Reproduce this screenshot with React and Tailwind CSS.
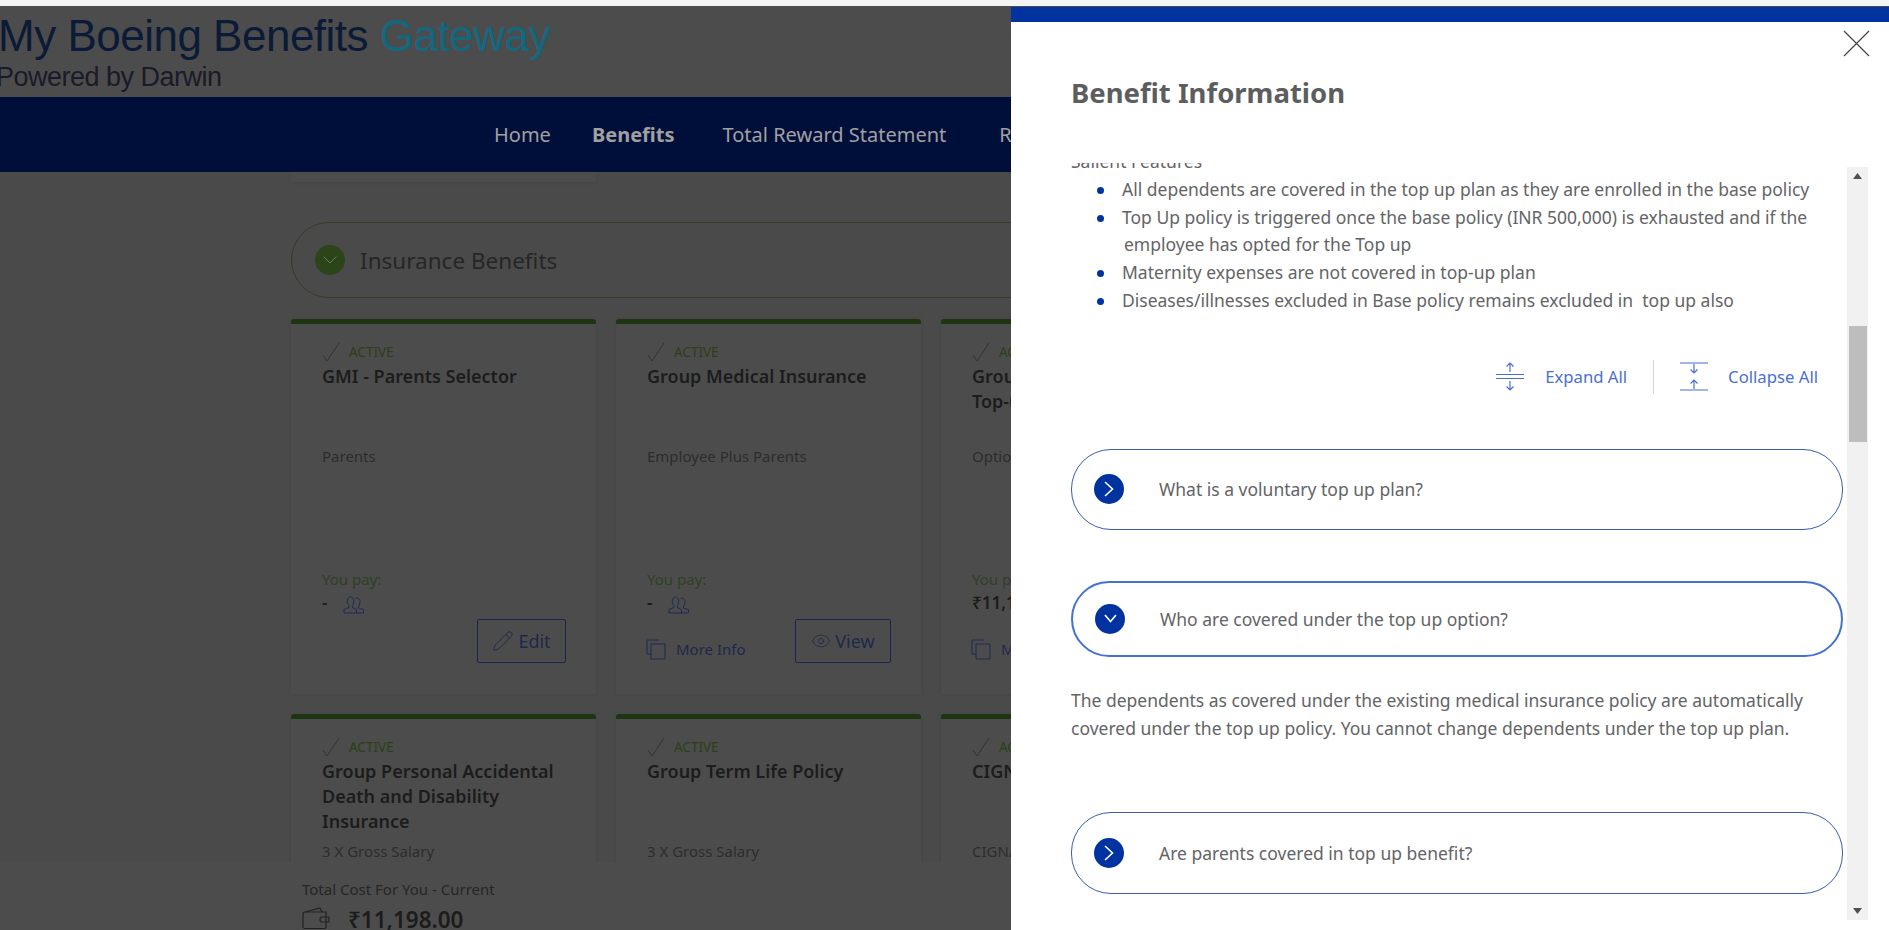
import React from 'react';
import { ChevronDown, Eye, Pencil } from 'lucide-react';

const cards = [
  { title: 'GMI - Parents Selector', sub: 'Parents', amount: '-', people: true, edit: true },
  { title: 'Group Medical Insurance', sub: 'Employee Plus Parents', amount: '-', people: true, more: true },
  { title: 'Group Medical Insurance Top-up', sub: 'Optional', amount: '₹11,198.00', more: true },
  { title: 'Group Personal Accidental Death and Disability Insurance', sub: '3 X Gross Salary', amount: '-' },
  { title: 'Group Term Life Policy', sub: '3 X Gross Salary', amount: '-' },
  { title: 'CIGNA', sub: 'CIGNA', amount: '-' },
];

const features = [
  'All dependents are covered in the top up plan as they are enrolled in the base policy',
  <>Top Up policy is triggered once the base policy (INR 500,000) is exhausted and if the<br /><span className="ml-[2px]">employee has opted for the Top up</span></>,
  'Maternity expenses are not covered in top-up plan',
  'Diseases/illnesses excluded in Base policy remains excluded in  top up also',
];

function CheckMark() {
  return (
    <svg width="18" height="20" viewBox="0 0 18 20" fill="none" stroke="#333333" strokeWidth="1">
      <path d="M1 13 L5 19 L17 1" />
    </svg>
  );
}

function People() {
  return (
    <svg className="mt-[5px]" width="22" height="18" viewBox="0 0 22 18" fill="none" stroke="#1d2b55" strokeWidth="1">
      <path d="M1 17 V13.5 L6 11.5 V9.5 C4.5 8 4 6 4.5 4 C5 1.5 6.5 1 7.5 1 C9 1 10.5 2 10.8 4 C11 6 10.5 8 9.5 9.5 V11.5 L13.5 13.5 V17 Z" />
      <path d="M12.5 2.5 C15 1.5 17 3 17 5.5 C17 7.5 16.5 9 15.5 10 V12 L20.5 13.5 V17 H13.5" />
    </svg>
  );
}

function CopyIcon() {
  return (
    <svg width="20" height="21" viewBox="0 0 20 21" fill="none" stroke="#1d2b55" strokeWidth="1">
      <path d="M13 1 H1 V15 H5" />
      <path d="M5 5 H19 V20 H5 Z" />
    </svg>
  );
}

function Wallet() {
  return (
    <svg className="-mt-[4px]" width="28" height="22" viewBox="0 0 28 22" fill="none" stroke="#222222" strokeWidth="1.2">
      <path d="M3 5 L18 1 L20 5" />
      <path d="M1 7 C1 5.5 2 5 3 5 H24 V20 C24 21 23.5 21.500 22.500 21.500 H3 C2 21.500 1 21 1 20 Z" />
      <path d="M27 10 H20 C18.500 10 18 11 18 12.500 C18 14 18.500 15 20 15 H27 Z" />
    </svg>
  );
}

function ExpandIcon() {
  return (
    <svg width="28" height="29" viewBox="0 0 28 29" fill="none" stroke="#4a6fd0" strokeWidth="1.2">
      <path d="M0 12.500 H28 M0 16.500 H28" />
      <path d="M14 1 V10 M10.500 4.500 L14 1 L17.500 4.500" />
      <path d="M14 19 V28 M10.500 24.500 L14 28 L17.500 24.500" />
    </svg>
  );
}

function CollapseIcon() {
  return (
    <svg width="28" height="29" viewBox="0 0 28 29" fill="none" stroke="#4a6fd0" strokeWidth="1.2">
      <path d="M0 1 H28 M0 28 H28" />
      <path d="M14 2 V11 M10.500 7.500 L14 11 L17.500 7.500" />
      <path d="M14 18 V27 M10.500 21.500 L14 18 L17.500 21.500" />
    </svg>
  );
}

function BenefitCard({ card }) {
  return (
    <div className="flex h-[375px] w-[305px] shrink-0 flex-col rounded-t-[3px] border-t-[5px] border-[#1e3512] bg-[#4c4c4c] pl-[31px] pr-[30px] pt-[17px] shadow-[0_0_3px_#464646]">
      <div className="flex h-[22px] items-center gap-[9px]">
        <CheckMark />
        <span className="text-[13.5px] text-[#2a4018]">ACTIVE</span>
      </div>
      <div className="mt-px h-[75px] text-[18px] font-semibold leading-[25px] text-[#1c1c1c]">{card.title}</div>
      <div className="mt-[7px] h-[122px] text-[15px] leading-5 text-[#2c2c2c]">{card.sub}</div>
      <div className="h-[22px] text-[15px] leading-[22px] text-[#2e4026]">You pay:</div>
      <div className="flex h-[25px] items-center gap-4 text-[17px] font-semibold text-[#1c1c1c]">
        {card.amount}
        {card.people && <People />}
      </div>
      <div className="mt-[4px] flex h-[44px] items-center justify-between">
        {card.more ? (
          <div className="mt-[16px] -ml-px flex items-center gap-[10px] text-[15px] text-[#20284a]">
            <CopyIcon />
            More Info
          </div>
        ) : <span />}
        {card.edit && (
          <div className="flex h-[44px] w-[89px] items-center justify-center gap-1 rounded-[2px] border border-[#1a2450] text-[18px] text-[#20284a]">
            <Pencil size={22} strokeWidth={1} />
            Edit
          </div>
        )}
        {card.more && (
          <div className="flex h-[44px] w-[96px] items-center justify-center gap-1 rounded-[2px] border border-[#1a2450] text-[18px] text-[#20284a]">
            <Eye size={20} strokeWidth={1} />
            View
          </div>
        )}
      </div>
    </div>
  );
}

function Question({ open, height, text }) {
  return (
    <div
      className={`flex items-center rounded-[40px] pl-[22px] ${open ? 'border-2 border-[#4472d4]' : 'border-[1.5px] border-[#3a5cb0]'}`}
      style={{ height }}
    >
      <span className="flex h-[30px] w-[30px] items-center justify-center rounded-full bg-[#0033a0]">
        {open ? (
          <svg width="13" height="9" viewBox="0 0 13 9" fill="none" stroke="white" strokeWidth="1.6"><path d="M1 1 L6.500 7.500 L12 1" /></svg>
        ) : (
          <svg width="10" height="16" viewBox="0 0 10 16" fill="none" stroke="white" strokeWidth="1.6"><path d="M1 1 L8.500 8 L1 15" /></svg>
        )}
      </span>
      <span className="ml-[35px] text-[17.5px] text-[#636466]">{text}</span>
    </div>
  );
}

export default function App() {
  return (
    <div className="relative h-[930px] overflow-hidden bg-[#4a4a4b] font-['Noto_Sans',sans-serif]">
      <div className="h-[6px] bg-[#f4f4f4]" />

      {/* Logo strip */}
      <div className="h-[91px] overflow-hidden bg-[#4c4c4c] font-['Liberation_Sans',sans-serif]">
        <div className="-ml-[2px] mt-[5px] whitespace-nowrap text-[44px] leading-[50px] tracking-[-0.5px] text-[#0b1a36]">
          My Boeing Benefits <span className="text-[#13687f]">Gateway</span>
        </div>
        <div className="-ml-[4px] mt-[2px] text-[27px] leading-7 tracking-[-0.5px] text-[#1a1a2a]">Powered by Darwin</div>
      </div>

      {/* Nav */}
      <nav className="flex h-[75px] items-center bg-[#000f3a] pl-[494px] text-[20px] text-[#a0a0a0]">
        <span>Home</span>
        <span className="ml-[41px] font-bold">Benefits</span>
        <span className="ml-[48px]">Total Reward Statement</span>
        <span className="ml-[53px]">Reports</span>
      </nav>

      <main className="pl-[291px]">
        <div className="h-[10px] w-[305px] bg-[#4c4c4c] shadow-[0_1px_2px_#464646]" />

        <div className="mt-[40px] flex h-[76px] w-[1300px] items-center rounded-[38px] border border-[#333a28] pl-[23px]">
          <span className="flex h-[30px] w-[30px] items-center justify-center rounded-full bg-[#2b4519] text-[#6f7d63]">
            <ChevronDown size={24} strokeWidth={1} />
          </span>
          <span className="ml-[15px] mt-[1px] text-[22.5px] text-[#262626]">Insurance Benefits</span>
        </div>

        <div className="mt-[21px] grid w-[990px] grid-cols-[305px_305px_305px] gap-x-[20px] gap-y-[20px]">
          {cards.map((card) => <BenefitCard key={card.title} card={card} />)}
        </div>
      </main>

      {/* Total cost footer */}
      <div className="absolute inset-x-0 bottom-0 h-[68px] bg-[#4c4c4c] pl-[302px] pt-[17px]">
        <div className="text-[15px] leading-5 text-[#262626]">Total Cost For You - Current</div>
        <div className="mt-[7px] flex items-center gap-[18px] text-[22.5px] font-semibold leading-7 text-[#1c1c1c]">
          <Wallet />
          ₹11,198.00
        </div>
      </div>

      {/* Benefit information drawer */}
      <aside className="absolute bottom-0 left-[1011px] right-0 top-[7px] flex flex-col border-t-[15px] border-[#0033a0] bg-white">
        <button className="absolute right-[19px] top-[8px] text-[#444444]">
          <svg width="27" height="27" viewBox="0 0 27 27" fill="none" stroke="currentColor" strokeWidth="1.2">
            <path d="M1 1 L26 26 M26 1 L1 26" />
          </svg>
        </button>
        <h2 className="h-[141px] pl-[60px] pt-[55px] text-[27.5px] font-bold leading-8 text-[#5c5d5f]">Benefit Information</h2>

        <div className="flex h-[757px] items-stretch">
          <div className="ml-[60px] w-[772px] shrink-0 overflow-hidden text-[17.5px] leading-[28px] text-[#636466]">
            <div className="-mt-[16px]">Salient Features</div>
            <ul className="mt-px leading-[27.7px]">
              {features.map((f, i) => (
                <li key={i} className="flex">
                  <span className="ml-[26px] mr-[18px] mt-[11px] h-[7px] w-[7px] shrink-0 rounded-full bg-[#0033a0]" />
                  <span className="whitespace-pre-wrap">{f}</span>
                </li>
              ))}
            </ul>

            <div className="mr-[25px] mt-[45px] flex h-[34px] items-center justify-end text-[16.7px] text-[#4a6fd0]">
              <ExpandIcon />
              <span className="ml-[21px]">Expand All</span>
              <span className="ml-[26px] mr-[26px] h-[34px] w-px bg-[#d5d5d5]" />
              <CollapseIcon />
              <span className="ml-[20px]">Collapse All</span>
            </div>

            <div className="mt-[55px]"><Question height={81} text="What is a voluntary top up plan?" /></div>
            <div className="mt-[51px]"><Question open height={76} text="Who are covered under the top up option?" /></div>
            <p className="mt-[29px]">
              The dependents as covered under the existing medical insurance policy are automatically<br />
              covered under the top up policy. You cannot change dependents under the top up plan.
            </p>
            <div className="mt-[70px]"><Question height={82} text="Are parents covered in top up benefit?" /></div>
          </div>

          {/* Scrollbar */}
          <div className="ml-[4px] mt-[4px] flex h-[753px] w-[21px] flex-col items-center bg-[#f1f1f1]">
            <svg className="mt-[6px]" width="9" height="6" viewBox="0 0 9 6" fill="#505050"><path d="M4.500 0 L9 6 H0 Z" /></svg>
            <div className="mt-[147px] h-[116px] w-[18px] bg-[#bdbdbd]" />
            <svg className="mb-[6px] mt-auto" width="9" height="6" viewBox="0 0 9 6" fill="#505050"><path d="M0 0 H9 L4.500 6 Z" /></svg>
          </div>
        </div>
      </aside>
    </div>
  );
}
